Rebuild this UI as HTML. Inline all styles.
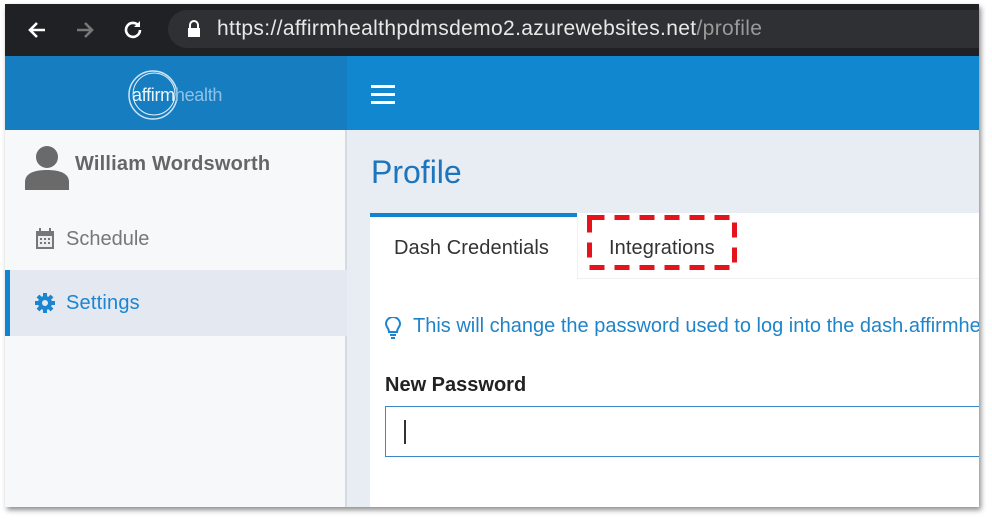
<!DOCTYPE html>
<html><head><meta charset="utf-8"><style>
*{margin:0;padding:0;box-sizing:border-box}
body{width:992px;height:520px;background:#fff;position:relative;overflow:hidden;font-family:"Liberation Sans",sans-serif}
#frame{position:absolute;left:5px;top:4px;width:974px;height:503px;overflow:hidden;box-shadow:2px 3px 5px rgba(0,0,0,.45);background:#e8ecf3}
.abs{position:absolute}
#bar{left:0;top:0;width:974px;height:52px;background:#202124}
#url{left:163px;top:6px;width:830px;height:38px;border-radius:19px;background:#2f3033}
#hdrL{left:0;top:52px;width:342px;height:74px;background:#167dc1}
#hdrR{left:342px;top:52px;width:632px;height:74px;background:#1187d0}
#side{left:0;top:126px;width:342px;height:377px;background:#f7f8fa;border-right:2px solid #d6dbe3}
</style></head><body>
<div id="frame">
<div class="abs" id="bar"></div>
<svg class="abs" style="left:20px;top:14px" width="24" height="24" viewBox="0 0 24 24"><path d="M20 12H5M12 5l-7 7 7 7" stroke="#fff" stroke-width="2.6" fill="none"/></svg>
<svg class="abs" style="left:68px;top:14px" width="24" height="24" viewBox="0 0 24 24"><path d="M4 12h15M12 5l7 7-7 7" stroke="#777" stroke-width="2.6" fill="none"/></svg>
<svg class="abs" style="left:116px;top:14px" width="24" height="24" viewBox="0 0 24 24"><path d="M19 12a7 7 0 1 1-2-5" stroke="#fff" stroke-width="2.6" fill="none"/><path d="M19 3v6h-6z" fill="#fff"/></svg>
<div class="abs" id="url"></div>
<svg class="abs" style="left:182px;top:16px" width="14" height="18" viewBox="0 0 14 18"><path d="M3 8V5a4 4 0 0 1 8 0v3" stroke="#fff" stroke-width="2" fill="none"/><rect x="1" y="8" width="12" height="9" fill="#fff"/></svg>
<div class="abs" style="left:212px;top:13px;font-size:21px;color:#e8e8e8;letter-spacing:0.35px">https://affirmhealthpdmsdemo2.azurewebsites.net<span style="color:#9a9a9a">/profile</span></div>
<div class="abs" id="hdrL"></div><div class="abs" id="hdrR"></div>
<svg class="abs" style="left:120px;top:62px" width="60" height="60" viewBox="0 0 60 60"><circle cx="28" cy="29" r="24" stroke="#cfe6f7" stroke-width="1.5" fill="none"/><circle cx="29" cy="28" r="21" stroke="#e6f2fb" stroke-width="1" fill="none"/></svg>
<div class="abs" style="left:127px;top:81px;font-size:18px;color:#eaf4fb;letter-spacing:-0.3px">affirm<span style="color:#8fc2e6">health</span></div>
<div class="abs" style="left:366px;top:81px;width:24px;height:3px;background:#fff;box-shadow:0 8px 0 #fff,0 16px 0 #fff"></div>
<div class="abs" id="side"></div>
<svg class="abs" style="left:20px;top:140px" width="44" height="46" viewBox="0 0 44 46"><circle cx="22" cy="13" r="11" fill="#6a6a6a"/><path d="M0 46v-8c0-8 8-12 22-12s22 4 22 12v8z" fill="#6a6a6a"/></svg>
<div class="abs" style="left:70px;top:149px;font-size:20px;font-weight:bold;color:#666;letter-spacing:0.2px">William Wordsworth</div>
<svg class="abs" style="left:30px;top:224px" width="20" height="22" viewBox="0 0 20 22"><rect x="1" y="3" width="18" height="18" fill="#777"/><rect x="3" y="8" width="14" height="11" fill="#eee"/><g fill="#777"><rect x="5" y="10" width="2" height="2"/><rect x="9" y="10" width="2" height="2"/><rect x="13" y="10" width="2" height="2"/><rect x="5" y="14" width="2" height="2"/><rect x="9" y="14" width="2" height="2"/><rect x="13" y="14" width="2" height="2"/></g><rect x="4" y="0" width="2" height="5" fill="#777"/><rect x="14" y="0" width="2" height="5" fill="#777"/></svg>
<div class="abs" style="left:61px;top:224px;font-size:20px;color:#777">Schedule</div>
<div class="abs" style="left:0;top:266px;width:342px;height:66px;background:#e4e9f1;border-left:5px solid #1283d0"></div>
<svg class="abs" style="left:30px;top:289px" width="20" height="20" viewBox="0 0 20 20"><g fill="#1a85d0"><circle cx="10" cy="10" r="7"/><g stroke="#1a85d0" stroke-width="4"><path d="M10 0v20M0 10h20M3 3l14 14M17 3L3 17"/></g></g><circle cx="10" cy="10" r="3" fill="#e4e9f1"/></svg>
<div class="abs" style="left:61px;top:288px;font-size:20px;color:#1a85d0;letter-spacing:0.2px">Settings</div>
<div class="abs" style="left:366px;top:150px;font-size:32px;color:#1c75bd">Profile</div>
<div class="abs" style="left:365px;top:209px;width:609px;height:300px;background:#fff"></div>
<div class="abs" style="left:365px;top:209px;width:207px;height:4px;background:#1283d0"></div>
<div class="abs" style="left:572px;top:213px;width:402px;height:62px;background:#fff;border-left:1px solid #eef0f3;border-bottom:1px solid #eef0f3"></div>
<div class="abs" style="left:389px;top:233px;font-size:20px;color:#333;letter-spacing:0.1px">Dash Credentials</div>
<div class="abs" style="left:604px;top:233px;font-size:20px;color:#333;letter-spacing:0.1px">Integrations</div>
<svg class="abs" style="left:580px;top:209px" width="155" height="60" viewBox="0 0 155 60"><rect x="4.5" y="4.5" width="145" height="50" fill="none" stroke="#e5131b" stroke-width="5" stroke-dasharray="15 10"/></svg>
<svg class="abs" style="left:380px;top:313px" width="16" height="22" viewBox="0 0 16 22"><path d="M4 15c0-4-3-5-3-8a7 7 0 0 1 14 0c0 3-3 4-3 8z" stroke="#1a85d0" stroke-width="2" fill="none"/><path d="M5 18h6M6 21h4" stroke="#1a85d0" stroke-width="2"/></svg>
<div class="abs" style="left:408px;top:311px;font-size:20px;color:#1f84c9;white-space:nowrap">This will change the password used to log into the dash.affirmhealth</div>
<div class="abs" style="left:380px;top:370px;font-size:20px;font-weight:bold;color:#222">New Password</div>
<div class="abs" style="left:380px;top:402px;width:620px;height:51px;border:1.5px solid #3a88c8;background:#fff"></div>
<div class="abs" style="left:399px;top:416px;width:1.5px;height:24px;background:#333"></div>
</div>
</body></html>
